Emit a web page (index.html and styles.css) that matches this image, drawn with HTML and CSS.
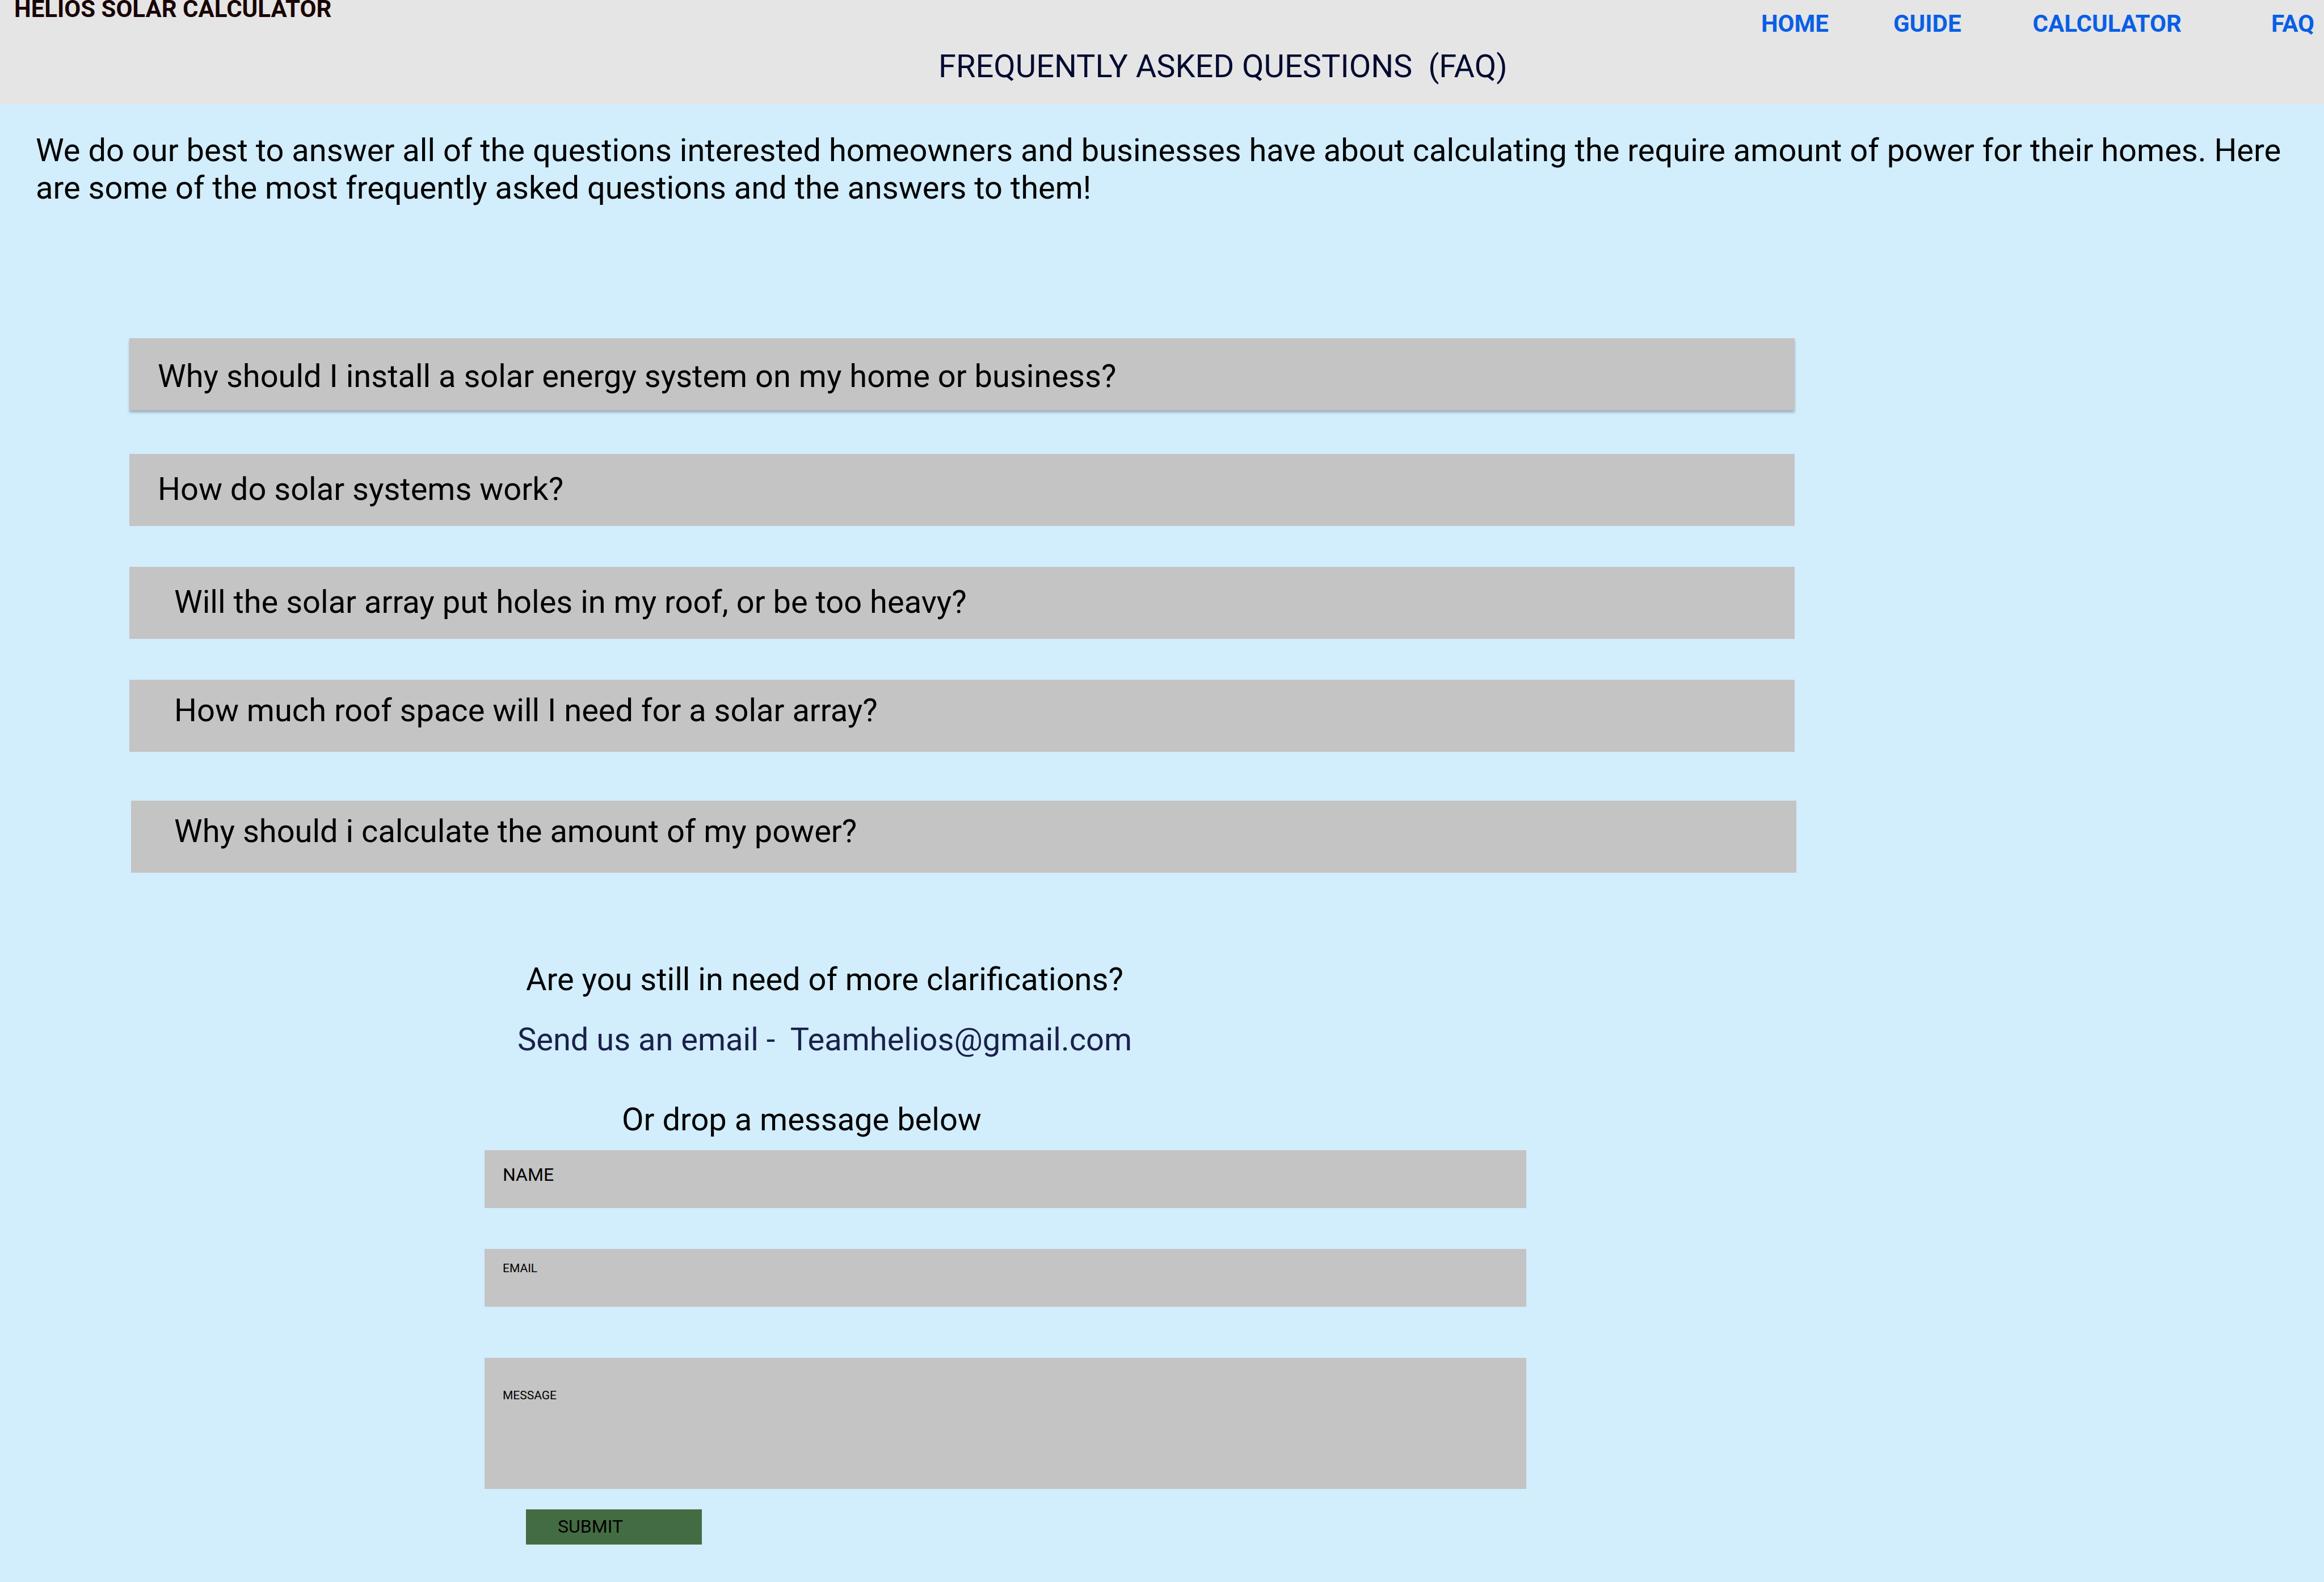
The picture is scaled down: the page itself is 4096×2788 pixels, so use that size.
FILE: index.html
```html
<!DOCTYPE html>
<html lang="en">
<head>
<meta charset="utf-8">
<meta name="viewport" content="width=device-width, initial-scale=1">
<title>Helios Solar Calculator - FAQ</title>
<link rel="stylesheet" href="styles.css">
</head>
<body>
<header class="header">
  <div class="topbar">
    <div class="brand">HELIOS SOLAR CALCULATOR</div>
    <nav class="nav">
      <a class="nav-home" href="#home">HOME</a>
      <a class="nav-guide" href="#guide">GUIDE</a>
      <a class="nav-calculator" href="#calculator">CALCULATOR</a>
      <a href="#faq">FAQ</a>
    </nav>
  </div>
  <div class="title-row">
    <h1 class="title">FREQUENTLY ASKED QUESTIONS&nbsp; (FAQ)</h1>
  </div>
</header>
<main>
  <p class="intro">We do our best to answer all of the questions interested homeowners and businesses have about calculating the require amount of power for their homes. Here are some of the most frequently asked questions and the answers to them!</p>

  <section class="faq" id="faq">
    <div class="faq-list">
      <button type="button" class="question question-raised">Why should I install a solar energy system on my home or business?</button>
      <button type="button" class="question question-second">How do solar systems work?</button>
      <button type="button" class="question question-inset">Will the solar array put holes in my roof, or be too heavy?</button>
      <button type="button" class="question question-inset question-high">How much roof space will I need for a solar array?</button>
      <button type="button" class="question question-inset question-high question-last">Why should i calculate the amount of my power?</button>
    </div>
  </section>

  <section class="contact">
    <div class="contact-body">
      <p class="lead">Are you still in need of more clarifications?</p>
      <p class="mail">Send us an email -&nbsp; <a href="mailto:Teamhelios@gmail.com">Teamhelios@gmail.com</a></p>
      <p class="drop">Or drop a message below</p>
      <form class="form">
        <div class="field field-name">
          <label for="name">NAME</label>
          <input id="name" name="name" type="text">
        </div>
        <div class="field field-email">
          <label for="email">EMAIL</label>
          <input id="email" name="email" type="email">
        </div>
        <div class="field field-message">
          <label for="message">MESSAGE</label>
          <textarea id="message" name="message"></textarea>
        </div>
        <button class="submit" type="submit">SUBMIT</button>
      </form>
    </div>
  </section>
</main>
</body>
</html>
```
FILE: styles.css
```css
* {
  box-sizing: border-box;
}

body {
  margin: 0;
  background: #d2edfc;
  color: #000;
  font-family: Roboto, "Liberation Sans", sans-serif;
  font-size: 56px;
  line-height: 66px;
}

h1,
p {
  margin: 0;
  font-size: inherit;
  font-weight: 400;
}

a {
  color: inherit;
  text-decoration: none;
}

button,
input,
textarea {
  border: 0;
  border-radius: 0;
  margin: 0;
  padding: 0;
  font: inherit;
  color: inherit;
}

/* Header */

.header {
  min-height: 184px;
  background: #e5e5e5;
}

.topbar {
  display: flex;
  justify-content: space-between;
  align-items: flex-start;
  padding: 0 17px 0 25px;
  font-size: 42px;
  font-weight: 700;
}

.brand {
  color: #190404;
  line-height: 32px;
}

.nav {
  display: flex;
  padding-top: 17px;
  color: #095fe5;
  line-height: 50px;
}

.nav-home {
  margin-right: 114px;
}

.nav-guide {
  margin-right: 126px;
}

.nav-calculator {
  margin-right: 158px;
}

.title-row {
  display: grid;
  grid-template-columns: 1654fr 2442fr;
  padding-top: 17px;
}

.title {
  grid-column: 2;
  color: #020a30;
}

/* Introduction */

.intro {
  padding: 48px 48px 0 63px;
}

/* Questions */

.faq {
  display: grid;
  grid-template-columns: 228fr 2935fr 933fr;
  padding-top: 232px;
}

.faq-list {
  grid-column: 2;
  display: flex;
  flex-direction: column;
  gap: 72px;
}

.question {
  padding: 29px 50px 32px;
  background: #c4c4c4;
  text-align: left;
}

.question-raised {
  padding-top: 34px;
  padding-bottom: 27px;
  box-shadow: 0 4px 4px rgba(0, 0, 0, 0.25);
}

.question-second {
  margin-top: 5px;
}

.question-inset {
  padding-left: 79px;
}

.question-high {
  padding-top: 21px;
  padding-bottom: 40px;
}

.question-last {
  margin: 14px -3px 0 3px;
  padding-left: 76px;
}

/* Contact */

.contact {
  display: grid;
  grid-template-columns: 854fr 1836fr 1406fr;
  padding: 155px 0 66px;
}

.contact-body {
  grid-column: 2;
}

.lead {
  padding-left: 73px;
}

.mail {
  padding: 40px 0 0 58px;
  color: #1a214b;
}

.drop {
  padding: 75px 0 21px 242px;
}

.form {
  display: flex;
  flex-direction: column;
}

.field {
  display: flex;
  flex-direction: column;
  min-height: 102px;
  padding: 22px 32px 0;
  background: #c4c4c4;
  font-size: 21px;
  line-height: 24px;
}

.field input,
.field textarea {
  flex: 1;
  min-height: 0;
  width: 100%;
  background: transparent;
  resize: none;
}

.field-name {
  padding-top: 24px;
  font-size: 32px;
  line-height: 38px;
}

.field-email {
  margin-top: 72px;
}

.field-message {
  min-height: 231px;
  margin-top: 90px;
  padding-top: 54px;
}

.submit {
  align-self: flex-start;
  width: 310px;
  margin: 36px 0 0 73px;
  padding: 11px 56px 13px;
  background: #446c43;
  font-size: 32px;
  line-height: 38px;
  text-align: left;
}
```
